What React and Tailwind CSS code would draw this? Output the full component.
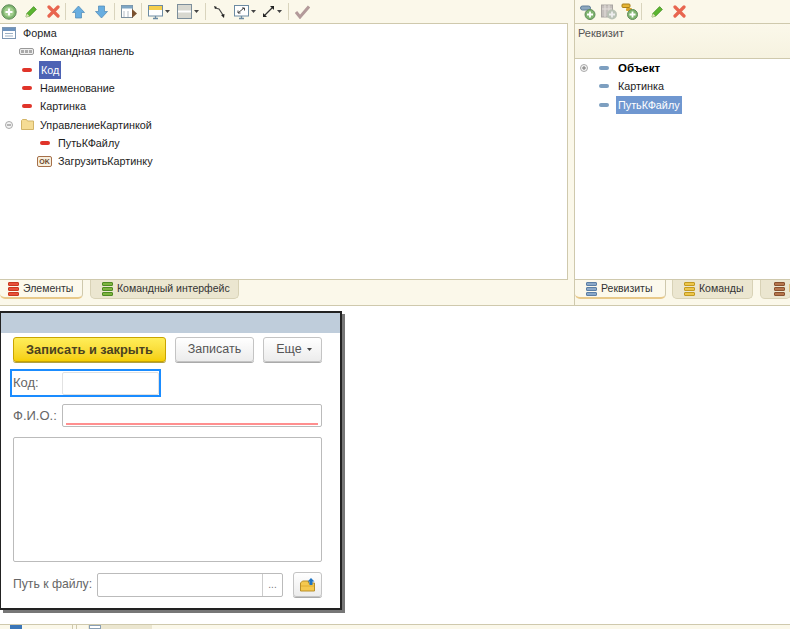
import React from 'react';

const font = { fontFamily: '"Liberation Sans", Arial, sans-serif' };

const AddIcon = ({ size = 16 }) => (
  <svg width={size} height={size} viewBox="0 0 16 16">
    <circle cx="8" cy="8" r="7.2" fill="#7fb56f" stroke="#5f8a58" />
    <circle cx="8" cy="8" r="5" fill="#a4cf8f" />
    <path d="M8 4.5v7M4.5 8h7" stroke="#fff" strokeWidth="2.2" />
  </svg>
);

const Pencil = () => (
  <svg width="14" height="14" viewBox="0 0 14 14">
    <path d="M2 12l.8-3.6L9.6 1.6l2.8 2.8-6.800 6.800z" fill="#5cb531" stroke="#3f8a1e" strokeWidth=".7" />
    <path d="M2 12l.8-3.600 2.800 2.800z" fill="#e8e2c0" />
  </svg>
);

const Cross = ({ color = '#e8654f' }) => (
  <svg width="13" height="13" viewBox="0 0 13 13">
    <path d="M2 2l9 9M11 2l-9 9" stroke={color} strokeWidth="3.200" strokeLinecap="round" />
  </svg>
);

const Arrow = ({ down }) => (
  <svg width="13" height="14" viewBox="0 0 13 14" className={down ? 'rotate-180' : ''}>
    <path d="M6.500 1L12.500 7.500H9.500V13H3.500V7.500H.5z" fill="#68aee0" stroke="#4d86b5" strokeWidth=".7" />
  </svg>
);

const Caret = () => (
  <svg width="5" height="3" viewBox="0 0 5 3" className="ml-[2px]">
    <path d="M0 0h5L2.500 3z" fill="#444" />
  </svg>
);

const Sep = () => <div className="w-px h-[17px] bg-[#d9d4bd]" />;

const Screen = ({ children }) => (
  <svg width="15" height="16" viewBox="0 0 15 16">
    <rect x=".5" y="1.500" width="14" height="10.500" fill="#fff" stroke="#6c8ba3" />
    {children}
    <path d="M5 14.500h5M7.500 12v2.500" stroke="#6c8ba3" strokeWidth="1.300" />
  </svg>
);

const StackIcon = ({ b, c }) => (
  <div className="flex flex-col gap-px w-[11px] shrink-0">
    {[0, 1, 2].map((i) => (
      <div key={i} className="h-[4px] rounded-[1px] border" style={{ background: b, borderColor: c }} />
    ))}
  </div>
);

const Toolbar = () => (
  <div className="h-[23px] flex items-center pl-[1px] shrink-0">
    <AddIcon />
    <div className="ml-[7px]"><Pencil /></div>
    <div className="ml-[9px]"><Cross /></div>
    <div className="ml-[5px]"><Sep /></div>
    <div className="ml-[6px]"><Arrow /></div>
    <div className="ml-[10px]"><Arrow down /></div>
    <div className="ml-[6px]"><Sep /></div>
    <svg width="16" height="14" viewBox="0 0 16 14" className="ml-[6px]">
      <rect x=".5" y=".5" width="11" height="12" fill="#fff" stroke="#7b8f9e" />
      <rect x=".5" y=".5" width="11" height="3" fill="#7ea6c4" />
      <path d="M3 6v6M7 6v6" stroke="#b5bec5" />
      <path d="M11 4l5 4.500-5 4.500z" fill="#7a5230" />
    </svg>
    <div className="ml-[4px]"><Sep /></div>
    <div className="ml-[6px] flex items-center">
      <Screen><rect x="1" y="2" width="13" height="4" fill="#f6cf4a" /></Screen>
      <Caret />
    </div>
    <div className="ml-[7px] flex items-center">
      <svg width="15" height="15" viewBox="0 0 15 15">
        <rect x=".5" y=".5" width="14" height="14" fill="#d8d8d0" stroke="#7d8f9c" />
        <path d="M1 7.500h13" stroke="#fff" strokeWidth="2" />
      </svg>
      <Caret />
    </div>
    <div className="ml-[6px]"><Sep /></div>
    <svg width="13" height="14" viewBox="0 0 13 14" className="ml-[7px]">
      <path d="M2 3l4 1 4 6" fill="none" stroke="#444" strokeWidth="1.200" />
      <path d="M1 1l3 1-2 2zM11 13l-3-3 3.500-1z" fill="#222" />
    </svg>
    <div className="ml-[8px] flex items-center">
      <Screen><path d="M4 9l6-5M8 4h2.500v2.500M4 6.500V9h2.500" fill="none" stroke="#444" /></Screen>
      <Caret />
    </div>
    <div className="ml-[6px] flex items-center">
      <svg width="13" height="13" viewBox="0 0 13 13">
        <path d="M2 11L11 2" stroke="#333" strokeWidth="1.200" />
        <path d="M8 1h4v4zM1 8v4h4z" fill="#222" />
      </svg>
      <Caret />
    </div>
    <div className="ml-[6px]"><Sep /></div>
    <svg width="15" height="14" viewBox="0 0 15 14" className="ml-[6px]">
      <path d="M1 7l4 5L14 1.500" fill="none" stroke="#b39a9a" strokeWidth="3" />
    </svg>
  </div>
);

const Dash = ({ blue }) => (
  <div className={`w-[10px] h-[4px] rounded-[2px] ${blue ? 'bg-[#7d9fc0]' : 'bg-[#e0342a]'}`} />
);

// строка дерева: отступ, слот под плюс/минус, значок, подпись
const Row = ({ indent = 0, toggleW = 10, icon, active, activeColor = 'bg-[#4c62b4]', toggle, bold, children }) => (
  <div className="h-[18.3px] flex items-center text-[10.8px] text-[#1d1d1d]" style={{ paddingLeft: indent }}>
    <div className="flex justify-start shrink-0" style={{ width: toggleW }}>{toggle}</div>
    <div className="w-[19px] flex justify-center">{icon}</div>
    <span className={`ml-[3px] px-[2px] leading-[18px] ${active ? `${activeColor} text-white` : ''} ${bold ? 'font-bold' : ''}`}>
      {children}
    </span>
  </div>
);

const Toggle = ({ plus }) => (
  <svg width="8" height="8" viewBox="0 0 8 8">
    <circle cx="4" cy="4" r="3.500" fill="#f4f4f4" stroke="#aaa" />
    <path d={plus ? 'M2 4h4M4 2v4' : 'M2 4h4'} stroke="#777" />
  </svg>
);

const Tab = ({ active, w, pl = 11, b, c, children }) => (
  <div
    className={`h-[19px] flex items-center gap-[4px] text-[10.5px] text-[#333] rounded-b-[5px] shrink-0 overflow-hidden ${
      active ? 'bg-[#fcf9ec] border-b-2 border-r border-[#e8c98a] border-r-[#cfc9ad]' : 'bg-[#ebe6d0] border border-t-0 border-[#d8d2b6]'
    }`}
    style={{ width: w, paddingLeft: pl }}
  >
    <StackIcon b={b} c={c} />
    <span className="whitespace-nowrap">{children}</span>
  </div>
);

const Btn = ({ w, children }) => (
  <div
    className="h-[25px] flex items-center justify-center rounded-[3px] border border-[#c4c4c4] bg-gradient-to-b from-white to-[#ececec] text-[12.500px] text-[#555] shadow-[0_1px_0_#aaa] shrink-0"
    style={{ width: w }}
  >
    {children}
  </div>
);

export default function App() {
  return (
    <div className="w-[790px] h-[629px] bg-white overflow-hidden flex flex-col" style={font}>
      {/* верхняя часть, конфигуратор */}
      <div className="h-[306px] shrink-0 flex bg-[#fbf8ea] border-b border-[#cfc9ad]">
        <div className="w-[568px] shrink-0 flex flex-col">
          <Toolbar />
          <div className="h-[257px] bg-white border-y border-r border-[#cfc9ad] pl-[1px]">
            <div className="h-[18.3px] flex items-center text-[10.8px] text-[#1d1d1d] pl-[1px]">
              <svg width="14" height="12" viewBox="0 0 14 12">
                <rect x=".5" y=".5" width="13" height="11" fill="#fff" stroke="#7d97b3" />
                <rect x="1" y="1" width="12" height="3" fill="#6d93bd" />
                <path d="M3 6.500h8M3 9h8" stroke="#9db1c4" />
              </svg>
              <span className="ml-[7px]">Форма</span>
            </div>
            <Row indent={6} icon={
              <div className="flex gap-px border border-[#999] rounded-[2px] bg-[#eee] p-px">
                <div className="w-[3px] h-[3px] bg-[#aaa]" /><div className="w-[3px] h-[3px] bg-[#aaa]" /><div className="w-[3px] h-[3px] bg-[#aaa]" />
              </div>
            }><span className="-ml-[1px] block">Командная панель</span></Row>
            <Row indent={6} icon={<Dash />} active>Код</Row>
            <Row indent={6} icon={<Dash />}><span className="-ml-[1px] block">Наименование</span></Row>
            <Row indent={6} icon={<Dash />}><span className="-ml-[1px] block">Картинка</span></Row>
            <Row indent={4} toggleW={13} toggle={<Toggle />} icon={
              <svg width="14" height="11" viewBox="0 0 14 11">
                <path d="M.5 10.500V1.500l1-1h4l1 1.500h6v8.500z" fill="#f5dc94" stroke="#d3b568" />
              </svg>
            }>
              <span className="-ml-[2px] block">УправлениеКартинкой</span>
            </Row>
            <Row indent={24} icon={<Dash />}><span className="-ml-[1px] block">ПутьКФайлу</span></Row>
            <Row indent={24} icon={
              <div className="w-[15px] h-[11px] flex items-center justify-center border border-[#a5704a] rounded-[2px] bg-[#f8efdf] text-[7px] font-bold leading-none text-[#6b4a2e]">OK</div>
            }><span className="-ml-[1px] block">ЗагрузитьКартинку</span></Row>
          </div>
          <div className="flex">
            <Tab active w={83} pl={8} b="#e8503a" c="#c8391f">Элементы</Tab>
            <div className="w-[7px] shrink-0" />
            <Tab w={149} b="#7db53f" c="#4f8a24">Командный интерфейс</Tab>
          </div>
        </div>

        <div className="w-[6px] shrink-0" />

        <div className="flex-1 min-w-0 flex flex-col border-l border-[#cfc9ad]">
          <div className="h-[23px] flex items-center pl-[5px] shrink-0">
            <svg width="16" height="16" viewBox="0 0 16 16">
              <rect x=".5" y="2" width="10" height="4" rx="2" fill="#8ba6bd" stroke="#5e7d99" />
              <circle cx="10" cy="10.500" r="5" fill="#7fb56f" stroke="#5f8a58" />
              <path d="M10 7.500v6M7 10.500h6" stroke="#fff" strokeWidth="1.800" />
            </svg>
            <svg width="17" height="16" viewBox="0 0 17 16" className="ml-[5px]">
              <rect x=".5" y="1" width="11" height="12" fill="#c5c0bd" stroke="#a9a5a2" />
              <path d="M4 1v12M8 1v12M1 5h10" stroke="#e4e0dc" />
              <circle cx="11" cy="10.500" r="5" fill="#b9c2b5" />
              <path d="M11 7.500v6M8 10.500h6" stroke="#eee" strokeWidth="1.800" />
            </svg>
            <svg width="17" height="17" viewBox="0 0 17 17" className="ml-[3px]">
              <rect x="1" y="1" width="8" height="3.500" rx="1" fill="#e6b534" stroke="#a8801a" />
              <rect x="5" y="5" width="6" height="3" rx="1" fill="#d7a42c" />
              <circle cx="11.500" cy="11.500" r="5" fill="#7fb56f" stroke="#5f8a58" />
              <path d="M11.500 8.500v6M8.500 11.500h6" stroke="#fff" strokeWidth="1.800" />
            </svg>
            <div className="ml-[3px]"><Sep /></div>
            <div className="ml-[8px]"><Pencil /></div>
            <div className="ml-[9px]"><Cross /></div>
          </div>
          <div className="h-[36px] shrink-0 border-y border-[#cfc9ad] bg-gradient-to-b from-[#fbf8ea] to-[#f6f2e0] px-[3px] pt-[2px] text-[11px] leading-[14px] text-[#555]">
            Реквизит
          </div>
          <div className="h-[221px] shrink-0 bg-white border-b border-[#cfc9ad] pl-[5px]">
            <Row toggleW={14} toggle={<Toggle plus />} icon={<Dash blue />} bold>
              <span className="text-black text-[11.500px]">Объект</span>
            </Row>
            <Row indent={4} icon={<Dash blue />}>Картинка</Row>
            <Row indent={4} icon={<Dash blue />} active activeColor="bg-[#6f97d0]">ПутьКФайлу</Row>
          </div>
          <div className="flex">
            <Tab active w={91} b="#8aa8c8" c="#5c7fa5">Реквизиты</Tab>
            <div className="w-[6px] shrink-0" />
            <Tab w={81} b="#edc64a" c="#c29a22">Команды</Tab>
            <div className="w-[7px] shrink-0" />
            <Tab w={31} pl={13} b="#b5754c" c="#8a5230">П</Tab>
          </div>
        </div>
      </div>

      {/* окно формы */}
      <div className="mt-[5px] w-[342px] h-[299px] shrink-0 bg-white border-2 border-l border-[#222] shadow-[3px_3px_0_#777] flex flex-col">
        <div className="h-[20px] bg-[#bfcddb] shrink-0" />
        <div className="flex gap-[9px] pl-[12px] pt-[4px]">
          <div className="w-[153px] h-[25px] flex items-center justify-center rounded-[3px] border border-[#c9a400] bg-gradient-to-b from-[#ffee58] to-[#f5cf00] text-[12.800px] font-bold text-[#4a4220] shadow-[0_1px_0_#b0a040]">
            Записать и закрыть
          </div>
          <Btn w={79}>Записать</Btn>
          <Btn w={59}>
            <span className="ml-[3px]">Еще</span>
            <svg width="5" height="3" viewBox="0 0 5 3" className="ml-[5px]"><path d="M0 0h5L2.500 3z" fill="#444" /></svg>
          </Btn>
        </div>
        <div className="ml-[9px] mt-[7px] w-[151px] h-[28px] border-2 border-[#1a8cff] flex items-center pl-[1px] text-[13px] text-[#666]">
          <span className="w-[49px]">Код:</span>
          <div className="w-[97px] h-[23px] border border-[#e2e2e2] rounded-[2px]" />
        </div>
        <div className="ml-[12px] mt-[7px] flex items-center text-[13px] text-[#666]">
          <span className="w-[49px] whitespace-nowrap">Ф.И.О.:</span>
          <div className="w-[260px] h-[23px] border border-[#bbb] rounded-[2px] flex items-end px-[3px] pb-[1px]">
            <div className="w-full h-[2px] bg-[#ff8f8f]" />
          </div>
        </div>
        <div className="ml-[12px] mt-[10px] w-[309px] h-[125px] border border-[#bbb] rounded-[2px]" />
        <div className="ml-[12px] mt-[10px] flex items-center text-[12.200px] text-[#666]">
          <span className="w-[84px] whitespace-nowrap">Путь к файлу:</span>
          <div className="w-[186px] h-[24px] border border-[#bbb] rounded-[2px] flex justify-end">
            <div className="w-[20px] border-l border-[#ccc] flex items-center justify-center text-[10px] text-[#777]">...</div>
          </div>
          <div className="ml-[10px]">
            <Btn w={29}>
              <svg width="15" height="14" viewBox="0 0 15 14">
                <path d="M.5 13V5l2-2h6v2h6v8z" fill="#f5c94f" stroke="#b88f2a" />
                <path d="M1 8h13" stroke="#e0ad30" />
                <path d="M11 0l3.500 3.500H12.500V7h-3V3.500H7.500z" fill="#1f74c4" />
              </svg>
            </Btn>
          </div>
        </div>
      </div>

      {/* нижняя полоса */}
      <div className="mt-[14px] flex-1 min-h-0 flex bg-[#fbf8ea] border-t border-[#cfc9ad]">
        <div className="w-[10px]" />
        <div className="w-[12px] h-[4px] bg-[#3a76b8]" />
        <div className="w-[50px]" />
        <div className="w-[5px] border-x border-[#cfc9ad]" />
        <div className="w-[11px]" />
        <div className="w-[64px] bg-[#ebe6d0] pl-[1px]">
          <div className="w-[12px] h-[4px] border border-[#8aa0b5] bg-white" />
        </div>
      </div>
    </div>
  );
}
